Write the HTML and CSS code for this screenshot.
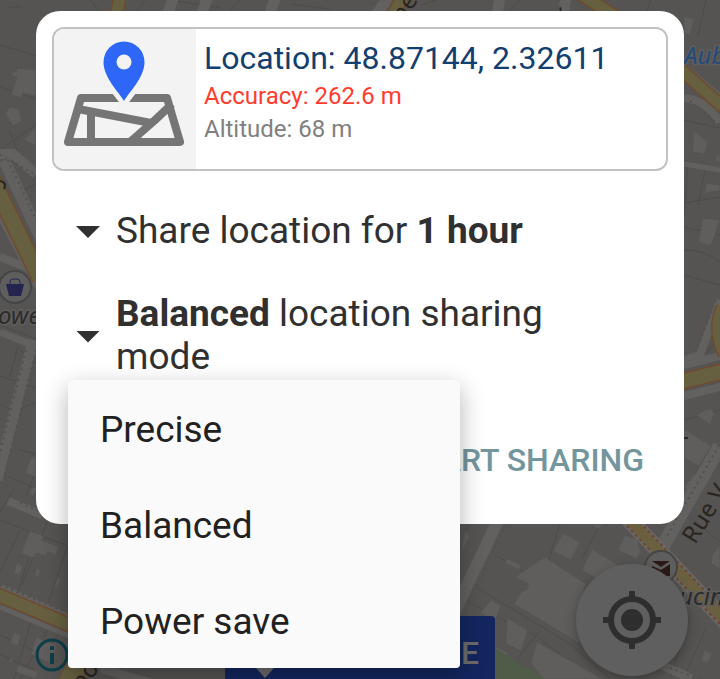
FILE: index.html
```html
<!DOCTYPE html>
<html lang="en">
<head>
<meta charset="utf-8">
<meta name="viewport" content="width=device-width, initial-scale=1">
<title>Share location</title>
<link rel="stylesheet" href="styles.css">
</head>
<body>
<main class="screen">
  <svg class="map" viewBox="0 0 720 679" preserveAspectRatio="xMidYMid slice" aria-hidden="true">
    <rect width="720" height="679" fill="#565452"/>
    <!-- Plot boundaries -->
    <path class="plot" d="M0 45l36 11M0 87l36 12M0 150l36-25M18 152l-9-22M24 190l12-6M22 7l-14 0M0 325l36 14M18 346l-8 30M0 376l36 12M0 404l14 8 22-10M20 350l16 12M8 476l110 50M18 449l18 5M14 490l-14 22M20 530l-20 42M36 535l-19 60M68 545l-20 58M0 520l68 26M36 470l-10 26M50 515l-28 70M32 618l-18 61M50 626l-30 53M0 635l55 25M0 655l34 14M60 632l-14 20M90 0l10 11M145 0l-8 11M170 0l50 8M240 0l-10 11M290 4l40 5M420 5l16-5M520 0l-10 11M650 0l-3 11M700 60l-12 0M706 0l-8 35M684 120l36 8M688 163l-4 52M706 165l-8 40M684 203l36-6M684 227l36 8M684 250q20 0 36 12M684 275l36 10M684 358q22 2 34-18M707 350l13-12M684 420l36-10M700 470l-16 20M684 512l36 30M468 602l68 34 40 30M470 520l-12 38M495 555l80 46M476 587l94 57 40 35M560 524l-12 38M600 524l-18 35M600 558l30 16M540 630l-22 28M640 640l50 39M690 615l-20 64M705 630l-22 49M684 580l36 18"/>
    <!-- Buildings -->
    <g class="building">
      <path d="M17 68l19 2v26l-13-3-2 5-10-3 6-18-6-2 2-4 3 1z"/>
      <path d="M10 107l9 2 3 12-9 5-8-13z"/><path d="M36 126l-12 14 12 6z"/>
      <path d="M31 457l5 1v19l-11-4z"/><path d="M33 487l4 1-3 8-5-3z"/>
      <path d="M30 531l14 5-2 4 17 7-3 8-8-3-2 4-9-3-4 5-12-5z"/><path d="M17 562l6 5-4 8-5-2zM37 568l4 2-3 7-4-2zM58 577l3 2-5 9-2-1z"/>
      <path d="M14 632l7 3-3 11-8-3zM18 665l20 7-2 7-20-7zM10 657l4 2-4 5zM36 637l20 8-3 20-22-11z"/>
      <path d="M684 16l10 3-4 16-6-2zM694 131l14 11-3 12-13-2zM703 218l17 2-9 26-13-4zM716 155h4v7h-4zM706 183l14 2v6l-11 1-4 3z"/>
      <path d="M705 410l7-1 2 5-4 11-13-10zM684 429l27 17-12 20-15-8zM695 473l2 3-6 8-5 8-1-6z"/>
      <path d="M563 533l17 9-9 18-18-9zM625 535l12 4 4 12-4 8-19-9zM592 549l28 17-12 20-26-16zM545 557l41 27q-12 26 1 56l-10 2-63-38 7-12 6-3 2-5-14-7 13-9z"/>
      <path d="M506 558l15 7-2 5-14-7zM491 600l10 6-6 15-15-8zM507 618l21 12-7 21-15-7zM537 642l66 37h-60l-12-16zM477 662l10-20 20 10-6 18zM712 555l8-10v24l-9-5zM704 650l8 4-4 9-7-2z"/>
      <path d="M465 530l5 6-10 20zM590 524l8 5 6-5zM674 526l10-4-4 9z"/>
    </g>
    <!-- Minor streets -->
    <g class="street">
      <path d="M0 154h13l23 20"/><path d="M4 160l40 85" stroke-width="12"/><path d="M0 212l42 80"/><path d="M0 257l36 14" stroke-width="8"/>
      <path d="M0 332l40 16" stroke-width="7"/><path d="M33 340L-3 480" stroke-width="11"/><path d="M8 501l34 14" stroke-width="8"/>
      <path d="M0 586l110 48" stroke-width="5"/><path d="M0 607l110 46" stroke-width="5"/>
      <path d="M174-4l-10 28M208-4l-10 28M276-4l-10 28M388-2l-14 20M500-4l-4 28M566-4l-4 28" stroke-width="11"/>
      <path d="M684 98q22 2 36 24" stroke-width="8"/><path d="M684 66l36 30" stroke-width="5"/><path d="M684 164l36 6" stroke-width="5"/>
      <path d="M720 300l-20 55-16 5M684 365l40-10M684 396l40-10" stroke-width="8"/>
      <path d="M720 446l-60 105" stroke-width="14"/><path d="M503 510l-50 105" stroke-width="12"/>
      <path d="M662 665l30 14M100 668l100 30" stroke-width="9"/>
    </g>
    <g class="footpath">
      <path d="M36 350L4 478M26 350L-2 460M8 160l36 77M0 155l36 20M20 503l24 10M0 585l68 28M690 101l30 25M722 440l-55 96M716 300l-22 54M506 524l-42 88M670 668l30 11"/>
    </g>
    <path d="M495 648l50 31h-50z" fill="#4f5d48"/>
    <!-- Main roads -->
    <g class="road-edge">
      <path d="M-10 175L40 278" stroke-width="18"/><path d="M-4 594l112 47" stroke-width="15"/>
      <path d="M120-5l-5 30M408-12l-24 42M574-10l44 28M680 69l44 39" stroke-width="14"/>
      <path d="M680 382l44-11M724 308q-10 22 2 45" stroke-width="17"/>
      <path d="M60 700l18-36" stroke-width="22"/>
    </g>
    <g class="road">
      <path d="M-10 175L40 278" stroke-width="15"/><path d="M-4 594l112 47" stroke-width="12"/>
      <path d="M120-5l-5 30M408-12l-24 42M574-10l44 28M680 69l44 39" stroke-width="11"/>
      <path d="M680 382l44-11M724 308q-10 22 2 45" stroke-width="14"/>
      <path d="M60 700l18-36" stroke-width="20"/>
    </g>
    <path d="M623 513l104 110" stroke="#696765" stroke-width="17" fill="none"/>
    <path d="M623 513l104 110" stroke="#6e4431" stroke-width="14" stroke-dasharray="3 3" fill="none"/>
    <path d="M623 513l104 110" stroke="#6a6040" stroke-width="10" fill="none"/>
    <path d="M0 181q7 1 4 8" fill="none" stroke="#292420" stroke-width="2"/>
    <path d="M684 438h4" stroke="#292929" stroke-width="2"/>
    <!-- Street and place names -->
    <g class="place">
      <text x="-2" y="324">owe</text>
      <text x="679" y="605">ucin</text>
      <text class="place-blue" x="684" y="64">Aub</text>
    </g>
    <g class="street-name">
      <text transform="translate(695 545) rotate(-58)">Rue V</text>
      <text transform="translate(411 12) rotate(-58)" text-anchor="middle">he</text>
      <text transform="translate(572 13) rotate(-84)" text-anchor="middle">r</text>
      <text transform="translate(82 692) rotate(-52)">po</text>
    </g>
    <!-- Shop and post office markers -->
    <circle class="marker" cx="15" cy="287" r="16"/>
    <path d="M6 284h18l-3 12H9z" fill="#25244e"/>
    <path d="M10 285v-3q0-3 3-3h4q3 0 3 3v3" fill="none" stroke="#25244e" stroke-width="1"/>
    <circle class="marker" cx="661" cy="567" r="16"/>
    <path d="M652 561h18l-9 6zM652 566l9 4 9-6v12h-18z" fill="#2b1916"/>
  </svg>

  <button class="info" type="button" aria-label="Map information">
    <svg viewBox="0 0 34 34"><circle cx="17" cy="17" r="15" fill="none" stroke="#0e3e49" stroke-width="3"/><path d="M17 8v4M17 15v11" stroke="#0e3e49" stroke-width="4"/></svg>
  </button>
  <button class="share" type="button">
    <svg viewBox="0 0 48 48" aria-hidden="true"><path d="M24 44l-9-10C11 28 10 21 10 17a14 14 0 0 1 28 0c0 4-1 11-5 17z" fill="#6b6b6b"/></svg>
    <span>SHARE</span>
  </button>
  <button class="locate" type="button" aria-label="Centre on my location">
    <svg viewBox="0 0 60 60"><circle cx="30" cy="30" r="21" fill="none" stroke="#2e2e2e" stroke-width="6"/><circle cx="30" cy="30" r="11" fill="#2e2e2e"/><path d="M30 1v8M30 51v8M1 30h8M51 30h8" stroke="#2e2e2e" stroke-width="6"/></svg>
  </button>

  <section class="dialog" role="dialog" aria-label="Share location">
    <div class="position">
      <div class="position-icon">
        <svg viewBox="0 0 120 120" aria-hidden="true">
          <g fill="none" stroke="#757575" stroke-width="8" stroke-linejoin="round">
            <path d="M17 65h86l13 44H4z"/>
            <path d="M14 76l73 14M27 79v30M108 71l-18 17-24 21"/>
          </g>
          <path d="M60 74l-10-13h20z" fill="#f3f3f3" stroke="#f3f3f3" stroke-width="2"/>
          <path d="M60 68C55 59 39.500 45 39.500 29a20.500 20.500 0 0 1 41 0C80.500 45 65 59 60 68z" fill="#2e67f8"/>
          <circle cx="60" cy="29" r="7.500" fill="#f3f3f3"/>
        </svg>
      </div>
      <div class="position-text">
        <p class="coords">Location: 48.87144, 2.32611</p>
        <p class="accuracy">Accuracy: 262.6 m</p>
        <p class="altitude">Altitude: 68 m</p>
      </div>
    </div>
    <div class="options">
      <button class="option" type="button" aria-haspopup="listbox">
        <span class="arrow"></span><span>Share location for <b>1 hour</b></span>
      </button>
      <div class="mode">
        <button class="option" type="button" aria-haspopup="listbox" aria-expanded="true">
          <span class="arrow"></span><span><b>Balanced</b> location sharing mode</span>
        </button>
        <div class="menu" role="listbox" aria-label="Location sharing mode">
          <button class="menu-item" type="button" role="option">Precise</button>
          <button class="menu-item" type="button" role="option" aria-selected="true">Balanced</button>
          <button class="menu-item" type="button" role="option">Power save</button>
        </div>
      </div>
    </div>
    <div class="actions">
      <button class="start" type="button">START SHARING</button>
    </div>
  </section>
</main>
</body>
</html>
```
FILE: styles.css
```css
* { box-sizing: border-box; }

body {
  margin: 0;
  font-family: Roboto, "Liberation Sans", sans-serif;
  background: #565452;
}

button {
  margin: 0;
  padding: 0;
  border: 0;
  background: none;
  font: inherit;
  color: inherit;
  text-align: left;
}

p { margin: 0; }

.screen {
  position: relative;
  min-height: 100vh;
  padding: 11px 36px;
  overflow: hidden;
}

/* Map */
.map {
  position: absolute;
  inset: 0;
  width: 100%;
  height: 100%;
}

.plot { fill: none; stroke: #4d4b49; stroke-width: 1; }
.building { fill: #5f5e5d; stroke: #555453; stroke-width: 1; }
.street { fill: none; stroke: #62615f; stroke-width: 10; }
.footpath { fill: none; stroke: #50504f; stroke-width: 2; stroke-dasharray: 2 4; }
.road-edge { fill: none; stroke: #6e4a30; }
.road { fill: none; stroke: #666040; }
.marker { fill: #5e5e5e; stroke: #454545; stroke-width: 2; }

.place,
.street-name {
  font-family: "Noto Sans", sans-serif;
  font-size: 24px;
  fill: #2b2b2b;
}

.place {
  font-style: italic;
  stroke: #5e5d5c;
  stroke-width: 3px;
  paint-order: stroke;
}

.place-blue { fill: #234a7c; }
.street-name { fill: #2a241f; }

/* Map controls */
.info {
  position: absolute;
  left: 35px;
  bottom: 7px;
  width: 34px;
  height: 34px;
}

.info svg,
.locate svg { display: block; width: 100%; }

.share {
  position: absolute;
  left: 225px;
  bottom: -20px;
  display: flex;
  align-items: center;
  justify-content: space-between;
  width: 270px;
  height: 83px;
  padding: 0 16px;
  border-radius: 4px;
  background: #13265f;
  color: #6b6b6b;
  font-size: 32px;
  font-weight: 500;
}

.share svg { width: 48px; }
.share span { padding-bottom: 10px; }

.locate {
  position: absolute;
  right: 32px;
  bottom: 3px;
  width: 112px;
  height: 112px;
  padding: 26px;
  border-radius: 50%;
  background: #5f5f5f;
  box-shadow: 0 4px 12px rgba(0, 0, 0, 0.3);
}

/* Dialog */
.dialog {
  position: relative;
  padding: 16px;
  border-radius: 24px;
  background: #fff;
  color: #303030;
}

.position {
  display: flex;
  min-height: 144px;
  border: 2px solid #c2c2c2;
  border-radius: 12px;
  overflow: hidden;
}

.position-icon {
  flex: none;
  width: 142px;
  padding: 4px 10px;
  background: #f3f3f3;
}

.position-icon svg { display: block; width: 120px; }

.position-text { padding: 10px 8px; }
.coords { font-size: 32px; line-height: 38px; color: #123e70; }
.accuracy { font-size: 24px; line-height: 38px; color: #ff3b30; }
.altitude { font-size: 24px; line-height: 28px; color: #808080; }

.options {
  display: flex;
  flex-direction: column;
  gap: 40px;
  padding: 38px 96px 0 24px;
}

.option {
  display: flex;
  align-items: center;
  gap: 16px;
  width: 100%;
  font-size: 37px;
  line-height: 43px;
}

.arrow {
  flex: none;
  width: 24px;
  height: 12px;
  margin-top: 3px;
  background: #303030;
  clip-path: polygon(0 0, 100% 0, 50% 100%);
}

.mode { position: relative; }

.menu {
  position: absolute;
  top: 100%;
  left: -8px;
  z-index: 1;
  width: 392px;
  margin-top: 2px;
  border-radius: 4px;
  background: #fafafa;
  color: #212121;
  box-shadow: 0 8px 24px rgba(0, 0, 0, 0.3);
}

.menu-item {
  display: block;
  width: 100%;
  height: 96px;
  padding: 2px 32px 0;
  font-size: 37px;
}

.actions {
  display: flex;
  justify-content: flex-end;
  padding: 46px 24px 12px;
}

.start {
  height: 72px;
  color: #73959d;
  font-size: 32px;
  font-weight: 500;
}
```
